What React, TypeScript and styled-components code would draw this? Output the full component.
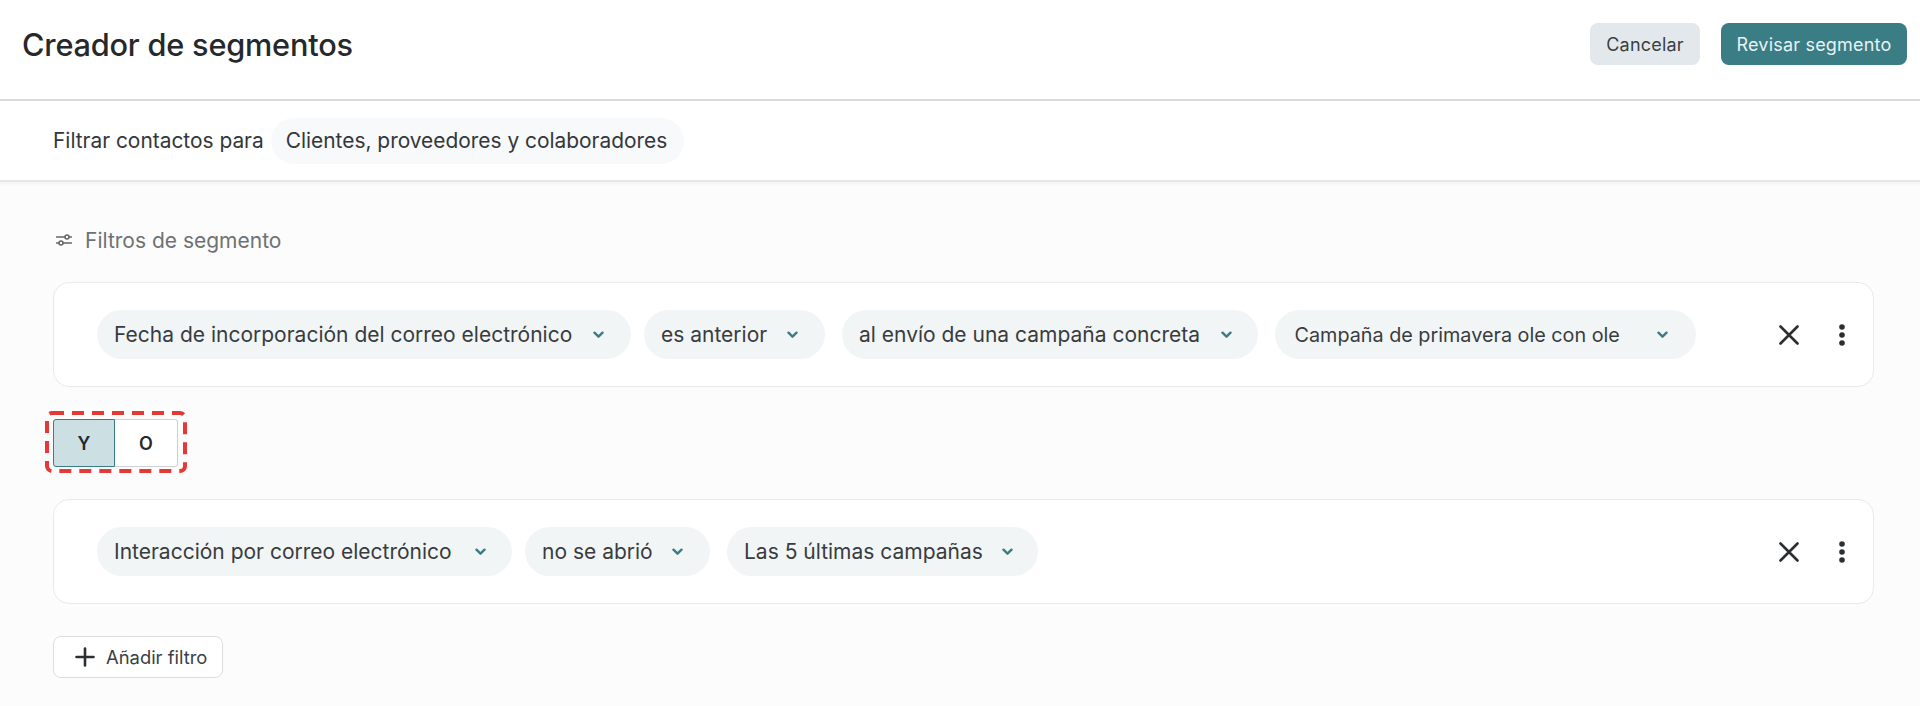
import React from "react";
import styled, { createGlobalStyle } from "styled-components";

const Global = createGlobalStyle`
  html, body { margin: 0; padding: 0; background: #fcfcfc; }
  body { font-family: Inter, "Liberation Sans", sans-serif; color: #2f3336; }
  * { box-sizing: border-box; }
`;

const Page = styled.div`
  width: 1920px;
  height: 706px;
  overflow: hidden;
  background: #fcfcfc;
`;

const Header = styled.header`
  height: 101px;
  padding: 23px 13px 0 22px;
  display: flex;
  justify-content: space-between;
  align-items: flex-start;
  background: #fff;
  border-bottom: 2px solid #d8dbdc;
`;

const Title = styled.h1`
  margin: 1px 0 0;
  font-size: 30.7px;
  line-height: 42px;
  font-weight: 550;
  letter-spacing: -0.2px;
  color: #26292b;
`;

const Actions = styled.div`
  display: flex;
  gap: 21px;
`;

const HeaderButton = styled.button<{ $primary?: boolean }>`
  height: 42px;
  width: ${(p) => (p.$primary ? "186px" : "110px")};
  border: none;
  border-radius: 8px;
  padding: 1px 0 0;
  font: 400 18px/41px Inter, "Liberation Sans", sans-serif;
  letter-spacing: 0.2px;
  background: ${(p) => (p.$primary ? "#3a7d85" : "#e3e8ed")};
  color: ${(p) => (p.$primary ? "#e8f2f3" : "#3a3f43")};
`;

const FilterBar = styled.div`
  height: 81px;
  padding: 0 0 0 53px;
  display: flex;
  align-items: center;
  gap: 7px;
  background: #fff;
  border-bottom: 2px solid #e4e6e7;
  box-shadow: 0 2px 3px rgba(0, 0, 0, 0.04);
  font-size: 20.9px;
  color: #33373a;
`;

const Audience = styled.span`
  height: 46px;
  width: 413px;
  border-radius: 23px;
  background: #f7f9fa;
  display: flex;
  align-items: center;
  padding-left: 15px;
  white-space: nowrap;
`;

const Main = styled.main`
  padding: 44px 46px 0 53px;
`;

const SectionLabel = styled.div`
  display: flex;
  align-items: center;
  gap: 13px;
  height: 28px;
  font-size: 21px;
  color: #6d7275;
  margin-bottom: 28px;
`;

const LabelIcon = styled.svg`
  width: 16px;
  height: 12px;
  margin-left: 3px;
  flex: none;
`;

const FilterCard = styled.section`
  height: 105px;
  border: 1px solid #e8eaeb;
  border-radius: 16px;
  background: #fff;
  padding: 0 27px 0 43px;
  display: flex;
  align-items: center;
`;

const Pills = styled.div`
  display: flex;
  flex: 1;
`;

const Pill = styled.div<{ $width: number; $gap: number; $before: number; $inset: number; $size: number }>`
  height: 49px;
  width: ${(p) => p.$width}px;
  margin-left: ${(p) => p.$before}px;
  border-radius: 24.5px;
  background: #f2f5f6;
  display: flex;
  align-items: center;
  justify-content: flex-start;
  gap: ${(p) => p.$gap}px;
  padding-left: ${(p) => p.$inset}px;
  font-size: ${(p) => p.$size}px;
  color: #383c3f;
  white-space: nowrap;
`;

const Chevron = styled.svg`
  width: 11px;
  height: 8px;
  flex: none;
`;

const CardActions = styled.div`
  display: flex;
  align-items: center;
  gap: 39px;
`;

const CloseIcon = styled.svg`
  width: 20px;
  height: 20px;
`;

const MoreIcon = styled.svg`
  width: 8px;
  height: 22px;
`;

const ToggleRow = styled.div`
  padding: 32px 0;
`;

const Toggle = styled.div`
  position: relative;
  width: 125px;
  height: 48px;
  display: flex;
`;

const ToggleOption = styled.div<{ $active?: boolean }>`
  width: ${(p) => (p.$active ? "62px" : "63px")};
  display: flex;
  align-items: center;
  justify-content: center;
  font-size: 18px;
  font-weight: 600;
  color: #26292b;
  background: ${(p) => (p.$active ? "#cce0e4" : "#fff")};
  border: 1px solid ${(p) => (p.$active ? "#3a7d85" : "#cfd2d4")};
  border-left-width: ${(p) => (p.$active ? "1px" : "0")};
  border-radius: ${(p) => (p.$active ? "3px 0 0 3px" : "0 3px 3px 0")};
`;

const DashedOutline = styled.svg`
  position: absolute;
  left: -8px;
  top: -8px;
  width: 142px;
  height: 62px;
  overflow: visible;
`;

const AddButton = styled.button`
  margin-top: 32px;
  width: 170px;
  height: 42px;
  display: flex;
  align-items: center;
  gap: 11px;
  padding: 0 0 0 21px;
  border: 1px solid #dcdfe1;
  border-radius: 8px;
  background: #fff;
  font: 400 18.4px Inter, "Liberation Sans", sans-serif;
  color: #3a3f43;
`;

const PlusIcon = styled.svg`
  width: 20px;
  height: 20px;
  flex: none;
`;

const ChevronDown = () => (
  <Chevron viewBox="0 0 11 8" fill="none">
    <path d="M1.5 1.7l4 4 4-4" stroke="#3a7d85" strokeWidth="2.4" strokeLinecap="round" strokeLinejoin="round" />
  </Chevron>
);

type PillData = { label: string; width: number; gap: number; before: number; inset?: number; size?: number };

const FilterRow = ({ pills }: { pills: PillData[] }) => (
  <FilterCard>
    <Pills>
      {pills.map((p) => (
        <Pill
          key={p.label}
          $width={p.width}
          $gap={p.gap}
          $before={p.before}
          $inset={p.inset ?? 17}
          $size={p.size ?? 21}
        >
          <span>{p.label}</span>
          <ChevronDown />
        </Pill>
      ))}
    </Pills>
    <CardActions>
      <CloseIcon viewBox="0 0 20 20" fill="none">
        <path d="M1.5 1.5l17 17M18.5 1.5l-17 17" stroke="#2c2f31" strokeWidth="2.6" strokeLinecap="round" />
      </CloseIcon>
      <MoreIcon viewBox="0 0 8 22" fill="#2c2f31">
        <circle cx="4" cy="3" r="2.8" />
        <circle cx="4" cy="11" r="2.8" />
        <circle cx="4" cy="19" r="2.8" />
      </MoreIcon>
    </CardActions>
  </FilterCard>
);

const first: PillData[] = [
  { label: "Fecha de incorporación del correo electrónico", width: 534, gap: 21, before: 0 },
  { label: "es anterior", width: 181, gap: 20, before: 13 },
  { label: "al envío de una campaña concreta", width: 416, gap: 21, before: 17 },
  { label: "Campaña de primavera ole con ole", width: 421, gap: 37, before: 17, inset: 19.5, size: 19.8 },
];

const second: PillData[] = [
  { label: "Interacción por correo electrónico", width: 415, gap: 23.5, before: 0 },
  { label: "no se abrió", width: 185, gap: 19, before: 13 },
  { label: "Las 5 últimas campañas", width: 311, gap: 19, before: 17 },
];

export default function App() {
  return (
    <Page>
      <Global />
      <Header>
        <Title>Creador de segmentos</Title>
        <Actions>
          <HeaderButton>Cancelar</HeaderButton>
          <HeaderButton $primary>Revisar segmento</HeaderButton>
        </Actions>
      </Header>
      <FilterBar>
        <span>Filtrar contactos para</span>
        <Audience>Clientes, proveedores y colaboradores</Audience>
      </FilterBar>
      <Main>
        <SectionLabel>
          <LabelIcon viewBox="0 0 16 12" fill="none" stroke="#5f6467" strokeWidth="1.5">
            <path d="M0.5 3h8.5M13 3h2.5M0.5 9h2.5M7 9h8.5" strokeLinecap="round" />
            <circle cx="11" cy="3" r="2" />
            <circle cx="5" cy="9" r="2" />
          </LabelIcon>
          Filtros de segmento
        </SectionLabel>
        <FilterRow pills={first} />
        <ToggleRow>
          <Toggle>
            <ToggleOption $active>Y</ToggleOption>
            <ToggleOption>O</ToggleOption>
            <DashedOutline viewBox="0 0 142 62" fill="none">
              <rect x="2" y="2" width="138" height="58" rx="5" stroke="#e53935" strokeWidth="4" strokeDasharray="12 8" />
            </DashedOutline>
          </Toggle>
        </ToggleRow>
        <FilterRow pills={second} />
        <AddButton>
          <PlusIcon viewBox="0 0 20 20" fill="none">
            <path d="M10 1.5v17M1.5 10h17" stroke="#2c2f31" strokeWidth="2.6" strokeLinecap="round" />
          </PlusIcon>
          Añadir filtro
        </AddButton>
      </Main>
    </Page>
  );
}
